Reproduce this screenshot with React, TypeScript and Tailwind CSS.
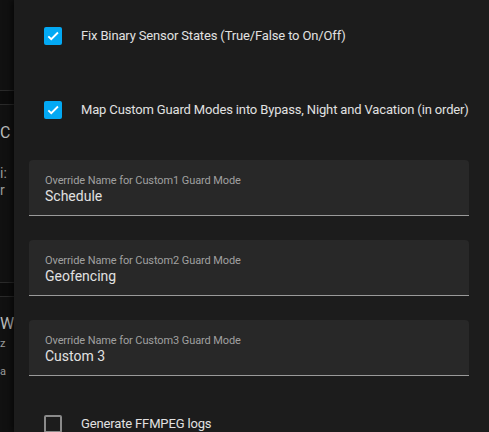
import React from 'react';

interface CheckRowProps {
  label: string;
  checked: boolean;
  className?: string;
}

const CheckRow: React.FC<CheckRowProps> = ({ label, checked, className }) => {
  return (
    <div className={`flex items-center h-[40px] shrink-0 ${className ?? ''}`}>
      {checked ? (
        <div className="ml-[15px] w-[18px] h-[18px] rounded-[2px] bg-[#03a9f4] flex items-center justify-center shrink-0">
          <svg width="14" height="14" viewBox="0 0 24 24" fill="none">
            <path d="M4 12.5l5 5L20.5 6" stroke="#ffffff" strokeWidth="3.2" />
          </svg>
        </div>
      ) : (
        <div className="ml-[15px] w-[18px] h-[18px] rounded-[2px] border-2 border-[#8a8a8a] shrink-0" />
      )}
      <span className="ml-[19px] text-[13px] tracking-[-0.15px] text-[#e1e1e1] whitespace-nowrap">{label}</span>
    </div>
  );
};

interface TextFieldProps {
  label: string;
  value: string;
  className?: string;
}

const TextField: React.FC<TextFieldProps> = ({ label, value, className }) => {
  return (
    <div className={`h-[56px] shrink-0 bg-[#282828] rounded-t-[4px] border-b border-[#9a9a9a] px-[16px] pt-[14px] ${className ?? ''}`}>
      <div className="text-[11px] leading-[13px] tracking-[-0.1px] text-[#a0a0a0] whitespace-nowrap">{label}</div>
      <div className="text-[14px] leading-[18px] text-[#e1e1e1]">{value}</div>
    </div>
  );
};

export default function App() {
  return (
    <div className="w-[489px] h-[432px] overflow-hidden flex bg-[#111111]" style={{ fontFamily: 'Roboto, "Noto Sans", sans-serif' }}>
      {/* page behind the dialog */}
      <div className="w-[14px] shrink-0 overflow-hidden flex flex-col text-[#9a9a9a] text-[14px] leading-[16px]">
        <div className="mt-[90px] h-[15px] shrink-0 border-y border-[#2a2a2a] bg-[#0c0c0c]" />
        <div className="mt-[20px] text-[16px] text-[#bdbdbd]">C</div>
        <div className="mt-[24px]">i:</div>
        <div className="mt-[1px]">r</div>
        <div className="mt-[84px] h-[15px] shrink-0 border-y border-[#2a2a2a] bg-[#0c0c0c]" />
        <div className="mt-[19px] text-[16px] text-[#bdbdbd]">W</div>
        <div className="mt-[4px] text-[11px]">z</div>
        <div className="mt-[12px] text-[11px]">a</div>
      </div>

      {/* dialog */}
      <div className="flex-1 min-w-0 bg-[#1c1c1c] shadow-[-3px_0_6px_rgba(0,0,0,0.55)] pl-[15px] pr-[20px] flex flex-col">
        <CheckRow className="mt-[16px]" checked label="Fix Binary Sensor States (True/False to On/Off)" />
        <CheckRow className="mt-[34px]" checked label="Map Custom Guard Modes into Bypass, Night and Vacation (in order)" />
        <TextField className="mt-[30px]" label="Override Name for Custom1 Guard Mode" value="Schedule" />
        <TextField className="mt-[24px]" label="Override Name for Custom2 Guard Mode" value="Geofencing" />
        <TextField className="mt-[24px]" label="Override Name for Custom3 Guard Mode" value="Custom 3" />
        <CheckRow className="mt-[28px]" checked={false} label="Generate FFMPEG logs" />
      </div>
    </div>
  );
}
